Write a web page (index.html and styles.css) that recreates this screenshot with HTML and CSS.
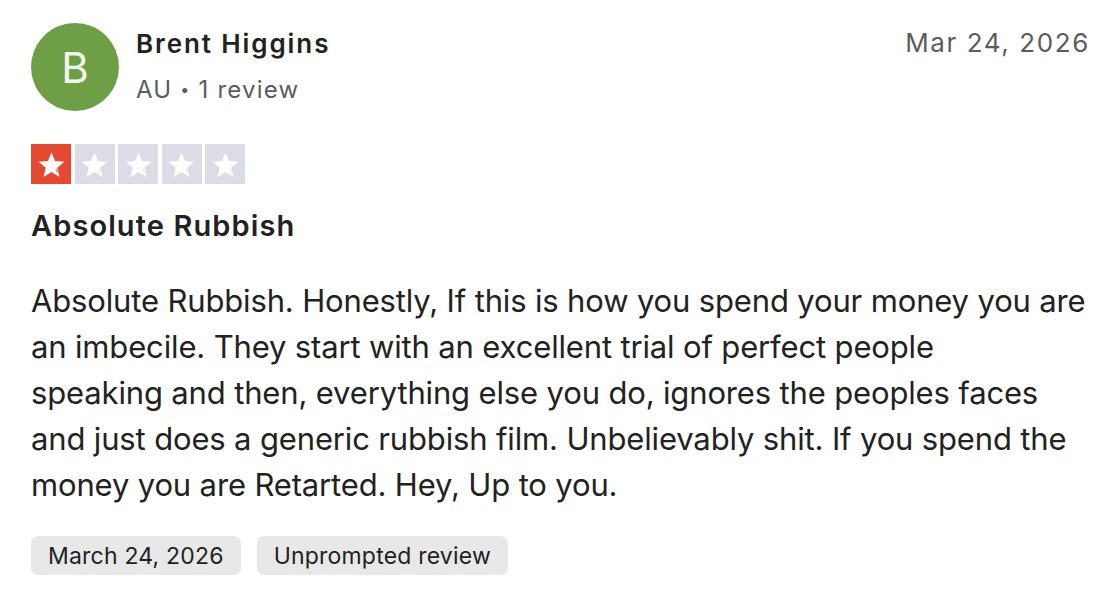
FILE: index.html
```html
<!DOCTYPE html>
<html>
<head>
  <title>Review - Brent Higgins</title>
  <link rel="stylesheet" href="styles.css">
</head>
<body>
  <article class="review">
    <header class="review-header">
      <div class="consumer">
        <div class="avatar">B</div>
        <div class="consumer-info">
          <div class="consumer-name">Brent Higgins</div>
          <div class="consumer-meta">AU <span class="dot">•</span> 1 review</div>
        </div>
      </div>
      <time class="review-date">Mar 24, 2026</time>
    </header>

    <div class="stars" title="Rated 1 out of 5 stars">
      <span class="star filled"><svg viewBox="0 0 24 24"><path class="shape" d="M12 3.2l2.6 6.3 6.8.5-5.2 4.4 1.6 6.6L12 17.4 6.2 21l1.6-6.6L2.6 10l6.8-.5z"/><path class="notch" d="M15.4 14.9l.7 3"/></svg></span>
      <span class="star"><svg viewBox="0 0 24 24"><path class="shape" d="M12 3.2l2.6 6.3 6.8.5-5.2 4.4 1.6 6.6L12 17.4 6.2 21l1.6-6.6L2.6 10l6.8-.5z"/><path class="notch" d="M15.4 14.9l.7 3"/></svg></span>
      <span class="star"><svg viewBox="0 0 24 24"><path class="shape" d="M12 3.2l2.6 6.3 6.8.5-5.2 4.4 1.6 6.6L12 17.4 6.2 21l1.6-6.6L2.6 10l6.8-.5z"/><path class="notch" d="M15.4 14.9l.7 3"/></svg></span>
      <span class="star"><svg viewBox="0 0 24 24"><path class="shape" d="M12 3.2l2.6 6.3 6.8.5-5.2 4.4 1.6 6.6L12 17.4 6.2 21l1.6-6.6L2.6 10l6.8-.5z"/><path class="notch" d="M15.4 14.9l.7 3"/></svg></span>
      <span class="star"><svg viewBox="0 0 24 24"><path class="shape" d="M12 3.2l2.6 6.3 6.8.5-5.2 4.4 1.6 6.6L12 17.4 6.2 21l1.6-6.6L2.6 10l6.8-.5z"/><path class="notch" d="M15.4 14.9l.7 3"/></svg></span>
    </div>

    <h2 class="review-title">Absolute Rubbish</h2>

    <p class="review-text">Absolute Rubbish. Honestly, If this is how you spend your money you are<br>
      an imbecile. They start with an excellent trial of perfect people<br>
      speaking and then, everything else you do, ignores the peoples faces<br>
      and just does a generic rubbish film. Unbelievably shit. If you spend the<br>
      money you are Retarted. Hey, Up to you.</p>

    <div class="tags">
      <span class="tag">March 24, 2026</span>
      <span class="tag">Unprompted review</span>
    </div>
  </article>
</body>
</html>
```

FILE: styles.css
```css
body {
  margin: 0;
  background: #ffffff;
  font-family: Inter, "Noto Sans", Arial, sans-serif;
  color: #222222;
}
.review {
  padding: 23px 18px 0 31px;
}
.review-header {
  display: flex;
  justify-content: space-between;
  align-items: flex-start;
}
.consumer {
  display: flex;
  align-items: center;
  gap: 17px;
}
.avatar {
  width: 88px;
  height: 88px;
  border-radius: 50%;
  background: #6e9e45;
  color: #f2f5ee;
  font-size: 42px;
  display: flex;
  align-items: center;
  justify-content: center;
}
.consumer-info {
  display: flex;
  flex-direction: column;
  gap: 15px;
}
.consumer-name {
  font-size: 26px;
  line-height: 30px;
  font-weight: 600;
  letter-spacing: 1.9px;
  color: #222222;
}
.consumer-meta {
  font-size: 24px;
  line-height: 30px;
  color: #5c5c5c;
  letter-spacing: 1.2px;
}
.dot {
  font-size: 16px;
  vertical-align: 3px;
}
.review-date {
  font-size: 26px;
  line-height: 30px;
  color: #5c5c5c;
  margin-top: 5px;
  letter-spacing: 1.6px;
}
.stars {
  display: flex;
  gap: 3.5px;
  margin-top: 33px;
}
.star {
  width: 40px;
  height: 40px;
  background: #dcdce6;
  display: flex;
  align-items: center;
  justify-content: center;
}
.star svg {
  width: 33px;
  height: 33px;
}
.star .shape {
  fill: #ffffff;
}
.star .notch {
  stroke: #dcdce6;
  stroke-width: 0.6;
}
.star.filled {
  background: #e5492f;
}
.star.filled .notch {
  stroke: #e5492f;
}
.review-title {
  font-size: 29px;
  line-height: 36px;
  font-weight: 600;
  letter-spacing: 1.1px;
  margin: 24px 0 0;
  color: #222222;
}
.review-text {
  font-size: 31px;
  line-height: 46px;
  margin: 34px 0 0;
  color: #222222;
  letter-spacing: -0.15px;
  white-space: nowrap;
}
.tags {
  display: flex;
  gap: 16px;
  margin-top: 28px;
}
.tag {
  background: #e8e8e8;
  border-radius: 7px;
  padding: 0 17px;
  height: 39px;
  display: flex;
  align-items: center;
  font-size: 23px;
  letter-spacing: 0.2px;
  color: #222222;
}
```
